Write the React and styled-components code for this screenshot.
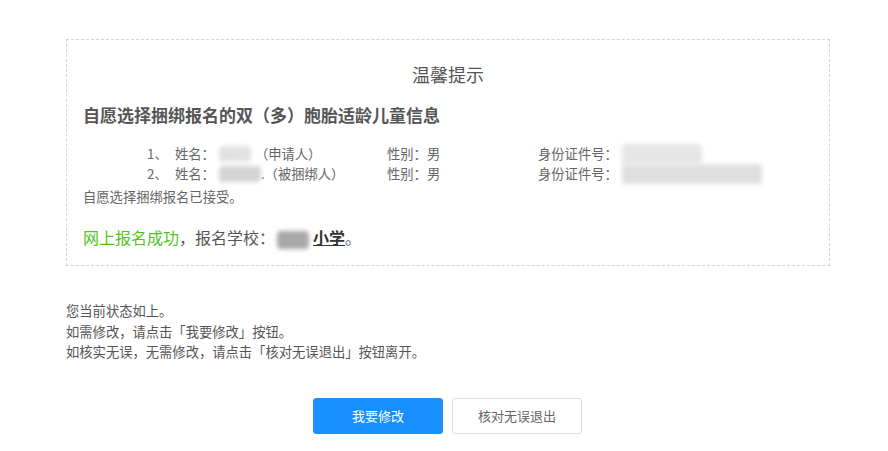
import styled, { createGlobalStyle } from 'styled-components'

const GlobalStyle = createGlobalStyle`
    body {
        margin: 0;
        background: #fff;
        font-family: "Microsoft YaHei", "Noto Sans CJK SC", "Noto Sans", sans-serif;
        color: #666;
    }
`

const Page = styled.div`
    padding: 39px 0 0 66px;
    width: 764px;
`

const NoticeBox = styled.div`
    border: 1px dashed #d4d4d4;
    padding: 20px 16px 16px;
`

const Title = styled.div`
    text-align: center;
    font-size: 18px;
    line-height: 28px;
    color: #555;
`

const Heading = styled.div`
    margin-top: 15px;
    font-size: 17px;
    line-height: 24px;
    font-weight: bold;
    color: #555;
`

const ChildList = styled.div`
    margin-top: 17px;
`

const ChildRow = styled.div`
    display: grid;
    grid-template-columns: 64px 28px 212px 151px 1fr;
    height: 20px;
    font-size: 13.3px;
    line-height: 20px;
    color: #666;
`

const Cell = styled.div`
    display: flex;
    align-items: center;
    white-space: nowrap;
`

const Blur = styled.span`
    display: inline-block;
    width: ${p => p.w}px;
    height: ${p => p.h || 16}px;
    margin: ${p => p.m || '0 4px'};
    background: ${p => p.bg || '#d8d8d8'};
    filter: blur(2px);
    border-radius: 4px;
    vertical-align: middle;
`

const Accepted = styled.div`
    margin-top: 3px;
    font-size: 13.3px;
    line-height: 20px;
`

const Success = styled.div`
    margin-top: 18px;
    font-size: 16px;
    line-height: 24px;
    color: #555;
`

const Green = styled.span`
    color: #52c41a;
`

const School = styled.span`
    color: #333;
    font-weight: bold;
    text-decoration: underline;
`

const StatusText = styled.div`
    margin-top: 35px;
    font-size: 13.3px;
    line-height: 20.5px;
    color: #555;
`

const ButtonBar = styled.div`
    margin-top: 35px;
    display: flex;
    justify-content: center;
    gap: 9px;
    padding-right: 1px;
`

const Button = styled.button`
    width: 130px;
    height: 36px;
    border-radius: 3px;
    font-family: inherit;
    font-size: 13px;
    cursor: pointer;
    border: 1px solid ${p => p.primary ? '#1890ff' : '#dcdcdc'};
    background: ${p => p.primary ? '#1890ff' : '#fff'};
    color: ${p => p.primary ? '#fff' : '#666'};
`

function App() {
    return (
        <Page>
            <GlobalStyle />
            <NoticeBox>
                <Title>温馨提示</Title>
                <Heading>自愿选择捆绑报名的双（多）胞胎适龄儿童信息</Heading>
                <ChildList>
                    <ChildRow>
                        <Cell />
                        <Cell>1、</Cell>
                        <Cell>姓名：<Blur w={32} bg="#e2e2e2" />（申请人）</Cell>
                        <Cell>性别：男</Cell>
                        <Cell>身份证件号：<Blur w={80} h={20} bg="#e6e6e6" m="0 0 0 4px" /></Cell>
                    </ChildRow>
                    <ChildRow>
                        <Cell />
                        <Cell>2、</Cell>
                        <Cell>姓名：<Blur w={42} bg="#d4d4d4" m="0 0 0 4px" />.（被捆绑人）</Cell>
                        <Cell>性别：男</Cell>
                        <Cell>身份证件号：<Blur w={140} h={20} bg="#e0e0e0" m="0 0 0 4px" /></Cell>
                    </ChildRow>
                </ChildList>
                <Accepted>自愿选择捆绑报名已接受。</Accepted>
                <Success>
                    <Green>网上报名成功</Green>，报名学校：<Blur w={32} h={18} bg="#a8a8a8" m="0 4px 0 2px" /><School>小学</School>。
                </Success>
            </NoticeBox>
            <StatusText>
                <div>您当前状态如上。</div>
                <div>如需修改，请点击「我要修改」按钮。</div>
                <div>如核实无误，无需修改，请点击「核对无误退出」按钮离开。</div>
            </StatusText>
            <ButtonBar>
                <Button primary>我要修改</Button>
                <Button>核对无误退出</Button>
            </ButtonBar>
        </Page>
    )
}

export default App
